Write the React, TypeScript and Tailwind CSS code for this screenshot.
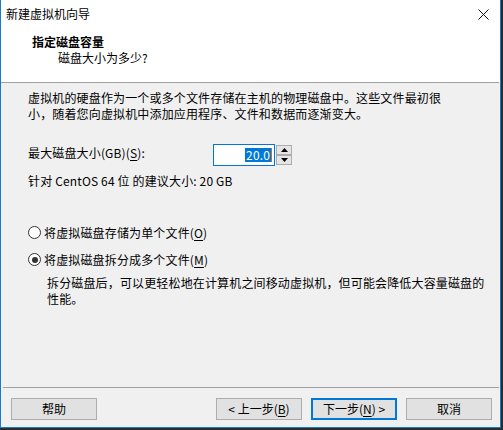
import React from "react";

function Radio({ checked }: { checked?: boolean }) {
  return (
    <span className="flex h-[13px] w-[13px] shrink-0 items-center justify-center rounded-full border border-[#333333] bg-white">
      {checked && <span className="h-[6px] w-[6px] rounded-full bg-[#333333]" />}
    </span>
  );
}

function Button({ children, primary }: { children: React.ReactNode; primary?: boolean }) {
  return (
    <button
      className={
        primary
          ? "flex h-[22px] w-[86px] items-center justify-center border-2 border-[#0078d7] bg-[#e1e1e1] text-[12px] leading-none text-black"
          : "flex h-[22px] w-[86px] items-center justify-center border border-[#adadad] bg-[#e1e1e1] text-[12px] leading-none text-black"
      }
    >
      {children}
    </button>
  );
}

export default function App() {
  return (
    <div
      className="h-[430px] w-[503px] bg-[#2b2b2b]"
      style={{ fontFamily: '"Noto Sans CJK SC", "Noto Sans", sans-serif' }}
    >
      <div className="flex h-[428px] w-[501px] flex-col border-x border-b border-[#1979ca] bg-[#f0f0f0] text-[12px] text-black">
        {/* title bar + header */}
        <div className="bg-white">
          <div className="flex h-[28px] items-center justify-between pl-[5px] pr-[11px]">
            <span className="leading-none">新建虚拟机向导</span>
            <svg width="11" height="11" viewBox="0 0 11 11">
              <path d="M0.5 0.5 L10.5 10.5 M10.5 0.5 L0.5 10.5" stroke="#111" strokeWidth="1" />
            </svg>
          </div>
          <div className="h-[54px] pt-[6px] pl-[31px] leading-[16px]">
            <div className="font-bold">指定磁盘容量</div>
            <div className="pl-[26px]">磁盘大小为多少?</div>
          </div>
        </div>
        <div className="mr-[1px] h-px bg-[#a0a0a0]" />

        {/* body */}
        <div className="flex flex-1 flex-col pl-[27px] pt-[7px] tracking-[0.15px]">
          <p className="leading-[16px]">
            虚拟机的硬盘作为一个或多个文件存储在主机的物理磁盘中。这些文件最初很
            <br />
            小，随着您向虚拟机中添加应用程序、文件和数据而逐渐变大。
          </p>

          <div className="mt-[22px] flex items-start">
            <span className="mt-[1px] w-[185px] leading-[15px]">
              最大磁盘大小(GB)(<u className="underline-offset-2">S</u>):
            </span>
            <div className="flex h-[22px] w-[62px] items-center justify-end border border-[#0078d7] bg-white pr-[2px]">
              <span className="bg-[#0078d7] px-px leading-[14px] text-white">20.0</span>
              <span className="h-[14px] w-px bg-[#c8741c]" />
            </div>
            <div className="ml-px flex h-[22px] w-[16px] flex-col justify-between py-px">
              <span className="flex h-[10px] items-center justify-center border border-[#adadad] bg-[#e5e5e5]">
                <svg width="7" height="4" viewBox="0 0 7 4">
                  <path d="M3.5 0 L7 4 L0 4 Z" fill="#000" />
                </svg>
              </span>
              <span className="flex h-[10px] items-center justify-center border border-[#adadad] bg-[#e5e5e5]">
                <svg width="7" height="4" viewBox="0 0 7 4">
                  <path d="M0 0 L7 0 L3.5 4 Z" fill="#000" />
                </svg>
              </span>
            </div>
          </div>

          <div className="mt-[7px] leading-[15px]">针对 CentOS 64 位 的建议大小: 20 GB</div>

          <div className="mt-[37px] flex items-center gap-[3px] leading-[15px]">
            <Radio />
            <span>
              将虚拟磁盘存储为单个文件(<u className="underline-offset-2">O</u>)
            </span>
          </div>
          <div className="mt-[12px] flex items-center gap-[3px] leading-[15px]">
            <Radio checked />
            <span>
              将虚拟磁盘拆分成多个文件(<u className="underline-offset-2">M</u>)
            </span>
          </div>
          <p className="mt-[8px] pl-[19px] leading-[16px]">
            拆分磁盘后，可以更轻松地在计算机之间移动虚拟机，但可能会降低大容量磁盘的
            <br />
            性能。
          </p>
        </div>

        {/* footer */}
        <div className="ml-[2px] mr-[1px] h-px bg-[#a0a0a0]" />
        <div className="flex items-center pl-[10px] pr-[8px] pt-[10px] pb-[7px]">
          <Button>帮助</Button>
          <div className="ml-auto flex gap-[9px]">
            <Button>
              &lt; 上一步(<u className="underline-offset-2">B</u>)
            </Button>
            <Button primary>
              下一步(<u className="underline-offset-2">N</u>) &gt;
            </Button>
            <Button>取消</Button>
          </div>
        </div>
      </div>
    </div>
  );
}
